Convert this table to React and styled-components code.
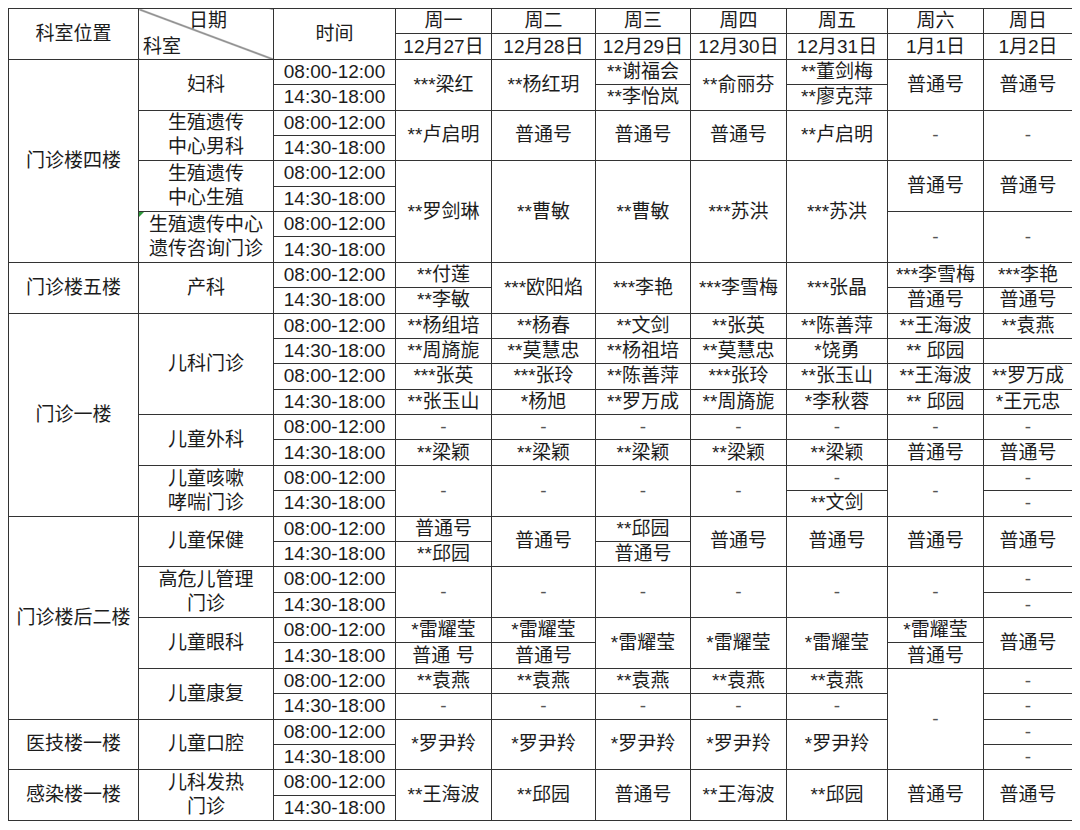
import styled, { createGlobalStyle } from "styled-components";

const GlobalStyle = createGlobalStyle`
  body {
    margin: 8px;
    background: #fff;
    color: #1c1c1c;
    font-family: "Liberation Sans", "Noto Sans CJK SC", sans-serif;
  }
`;

const ROW_H = 25.375;

const days = [
  ["周一", "12月27日"],
  ["周二", "12月28日"],
  ["周三", "12月29日"],
  ["周四", "12月30日"],
  ["周五", "12月31日"],
  ["周六", "1月1日"],
  ["周日", "1月2日"],
];

const widths = [130, 135, 122, 96, 104, 95, 96, 101, 96, 89];

// each column: list of [text, rowspan, mark?]
const location = [
  ["门诊楼四楼", 8],
  ["门诊楼五楼", 2],
  ["门诊一楼", 8],
  ["门诊楼后二楼", 8],
  ["医技楼一楼", 2],
  ["感染楼一楼", 2],
];

const depts = [
  ["妇科", 2],
  ["生殖遗传\n中心男科", 2],
  ["生殖遗传\n中心生殖", 2],
  ["生殖遗传中心\n遗传咨询门诊", 2, true],
  ["产科", 2],
  ["儿科门诊", 4],
  ["儿童外科", 2],
  ["儿童咳嗽\n哮喘门诊", 2],
  ["儿童保健", 2],
  ["高危儿管理\n门诊", 2],
  ["儿童眼科", 2],
  ["儿童康复", 2],
  ["儿童口腔", 2],
  ["儿科发热\n门诊", 2],
];

const times = Array.from({ length: 30 }, (_, i) => [i % 2 ? "14:30-18:00" : "08:00-12:00", 1]);

const schedule = [
  [["***梁红", 2], ["**卢启明", 2], ["**罗剑琳", 4], ["**付莲", 1], ["**李敏", 1], ["**杨组培", 1], ["**周旖旎", 1], ["***张英", 1], ["**张玉山", 1], ["-", 1], ["**梁颖", 1], ["-", 2], ["普通号", 1], ["**邱园", 1], ["-", 2], ["*雷耀莹", 1], ["普通 号", 1], ["**袁燕", 1], ["-", 1], ["*罗尹羚", 2], ["**王海波", 2]],
  [["**杨红玥", 2], ["普通号", 2], ["**曹敏", 4], ["***欧阳焰", 2], ["**杨春", 1], ["**莫慧忠", 1], ["***张玲", 1], ["*杨旭", 1], ["-", 1], ["**梁颖", 1], ["-", 2], ["普通号", 2], ["-", 2], ["*雷耀莹", 1], ["普通号", 1], ["**袁燕", 1], ["-", 1], ["*罗尹羚", 2], ["**邱园", 2]],
  [["**谢福会", 1], ["**李怡岚", 1], ["普通号", 2], ["**曹敏", 4], ["***李艳", 2], ["**文剑", 1], ["**杨祖培", 1], ["**陈善萍", 1], ["**罗万成", 1], ["-", 1], ["**梁颖", 1], ["-", 2], ["**邱园", 1], ["普通号", 1], ["-", 2], ["*雷耀莹", 2], ["**袁燕", 1], ["-", 1], ["*罗尹羚", 2], ["普通号", 2]],
  [["**俞丽芬", 2], ["普通号", 2], ["***苏洪", 4], ["***李雪梅", 2], ["**张英", 1], ["**莫慧忠", 1], ["***张玲", 1], ["**周旖旎", 1], ["-", 1], ["**梁颖", 1], ["-", 2], ["普通号", 2], ["-", 2], ["*雷耀莹", 2], ["**袁燕", 1], ["-", 1], ["*罗尹羚", 2], ["**王海波", 2]],
  [["**董剑梅", 1], ["**廖克萍", 1], ["**卢启明", 2], ["***苏洪", 4], ["***张晶", 2], ["**陈善萍", 1], ["*饶勇", 1], ["**张玉山", 1], ["*李秋蓉", 1], ["-", 1], ["**梁颖", 1], ["-", 1], ["**文剑", 1], ["普通号", 2], ["-", 2], ["*雷耀莹", 2], ["**袁燕", 1], ["-", 1], ["*罗尹羚", 2], ["**邱园", 2]],
  [["普通号", 2], ["-", 2], ["普通号", 2], ["-", 2], ["***李雪梅", 1], ["普通号", 1], ["**王海波", 1], ["** 邱园", 1], ["**王海波", 1], ["** 邱园", 1], ["-", 1], ["普通号", 1], ["-", 2], ["普通号", 2], ["-", 2], ["*雷耀莹", 1], ["普通号", 1], ["-", 4], ["普通号", 2]],
  [["普通号", 2], ["-", 2], ["普通号", 2], ["-", 2], ["***李艳", 1], ["普通号", 1], ["**袁燕", 1], ["", 1], ["**罗万成", 1], ["*王元忠", 1], ["-", 1], ["普通号", 1], ["-", 1], ["-", 1], ["普通号", 2], ["-", 1], ["-", 1], ["普通号", 2], ["-", 1], ["-", 1], ["-", 1], ["-", 1], ["普通号", 2]],
];

const columns = [location, depts, times, ...schedule];

// turn the column lists into rows of cells that start at each row index
const buildRows = () => {
  const rows = Array.from({ length: 30 }, () => []);
  columns.forEach((col, ci) => {
    let r = 0;
    col.forEach(([text, span, mark]) => {
      rows[r].push({ ci, text, span, mark });
      r += span;
    });
  });
  return rows;
};

const App = () => {
  const rows = buildRows();
  return (
    <>
      <GlobalStyle />
      <Table>
        <colgroup>
          {widths.map((w, i) => (
            <col key={i} style={{ width: w }} />
          ))}
        </colgroup>
        <thead>
          <Row>
            <Cell rowSpan={2}>科室位置</Cell>
            <DiagCell rowSpan={2}>
              <DiagLabels>
                <span className="top">日期</span>
                <span className="bottom">科室</span>
              </DiagLabels>
            </DiagCell>
            <Cell rowSpan={2}>时间</Cell>
            {days.map(([d]) => (
              <Cell key={d}>{d}</Cell>
            ))}
          </Row>
          <Row>
            {days.map(([d, date]) => (
              <Cell key={d}>{date}</Cell>
            ))}
          </Row>
        </thead>
        <tbody>
          {rows.map((cells, ri) => (
            <Row key={ri}>
              {cells.map((c) => (
                <Cell key={c.ci} rowSpan={c.span} $mark={c.mark} $dash={c.text === "-"}>
                  {c.text}
                </Cell>
              ))}
            </Row>
          ))}
        </tbody>
      </Table>
    </>
  );
};

export default App;

const Table = styled.table`
  width: 1064px;
  table-layout: fixed;
  border-collapse: collapse;
  border: 1px solid #555;
  font-size: 19px;
`;

const Row = styled.tr`
  height: ${ROW_H}px;
`;

const Cell = styled.td`
  position: relative;
  border: 1px solid #333;
  padding: 0;
  text-align: center;
  vertical-align: middle;
  line-height: 24px;
  white-space: pre-line;
  color: ${(p) => (p.$dash ? "#555" : "#1c1c1c")};

  ${(p) =>
    p.$mark &&
    `
    &::before {
      content: "";
      position: absolute;
      top: 0;
      left: 0;
      border-top: 5px solid #2e9a3c;
      border-right: 5px solid transparent;
    }
  `}
`;

const DiagCell = styled.td`
  border: 1px solid #333;
  padding: 0;
  background: linear-gradient(
    to top right,
    transparent calc(50% - 1px),
    #333 50%,
    transparent calc(50% + 1px)
  );
`;

const DiagLabels = styled.div`
  height: 48px;
  display: flex;
  flex-direction: column;
  justify-content: space-between;
  line-height: 22px;

  .top {
    align-self: center;
    padding-left: 4px;
  }
  .bottom {
    align-self: flex-start;
    padding-left: 4px;
  }
`;
